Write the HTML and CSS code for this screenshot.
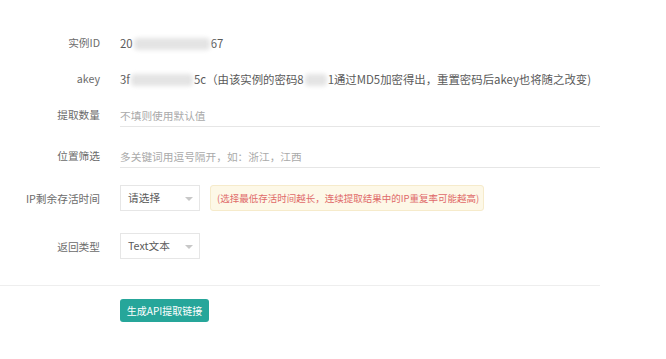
FILE: index.html
```html
<!DOCTYPE html>
<html lang="zh-CN">
<head>
  <meta charset="UTF-8">
  <meta name="viewport" content="width=device-width, initial-scale=1.0">
  <title>API提取</title>
  <link rel="stylesheet" href="styles.css">
</head>
<body>
  <form class="api-form">
    <!-- instance info -->
    <div class="row row-info">
      <span class="label">实例ID</span>
      <span class="value">20<span class="masked mask-id"></span>67</span>
    </div>
    <div class="row row-info">
      <span class="label">akey</span>
      <span class="value">3f<span class="masked mask-key"></span>5c（由该实例的密码8<span class="masked mask-pwd"></span>1通过MD5加密得出，重置密码后akey也将随之改变)</span>
    </div>

    <!-- filters -->
    <div class="row">
      <span class="label">提取数量</span>
      <input class="line-input" type="text" placeholder="不填则使用默认值">
    </div>
    <div class="row row-loc">
      <span class="label">位置筛选</span>
      <input class="line-input" type="text" placeholder="多关键词用逗号隔开，如：浙江，江西">
    </div>
    <div class="row row-ttl">
      <span class="label">IP剩余存活时间</span>
      <div class="select">请选择<i class="caret"></i></div>
      <div class="tip">(选择最低存活时间越长，连续提取结果中的IP重复率可能越高)</div>
    </div>
    <div class="row">
      <span class="label">返回类型</span>
      <div class="select">Text文本<i class="caret"></i></div>
    </div>

    <div class="divider"></div>
    <button type="button" class="btn">生成API提取链接</button>
  </form>
</body>
</html>
```

FILE: styles.css
```css
body {
  margin: 0;
  background: #fff;
  font-family: "Noto Sans CJK SC", "Microsoft YaHei", sans-serif;
  font-size: 10.7px;
  color: #5a5a5a;
}
.api-form {
  width: 600px;
  padding-top: 30px;
}
.row {
  display: flex;
  align-items: center;
  min-height: 25px;
  margin-bottom: 16px;
}
.row-info {
  margin-bottom: 11px;
}
.row-loc {
  margin-bottom: 17px;
}
.row-ttl {
  margin-bottom: 22px;
}
.label {
  width: 100px;
  margin-right: 20px;
  text-align: right;
  color: #6b6b6b;
  white-space: nowrap;
}
.value {
  white-space: nowrap;
  font-size: 11.4px;
  color: #5a5a5a;
}
.masked {
  display: inline-block;
  height: 12px;
  vertical-align: middle;
  background: #e4e4e4;
  border-radius: 4px;
  filter: blur(2px);
}
.mask-id { width: 76px; margin: 0 1px; }
.mask-key { width: 62px; margin: 0 1px; }
.mask-pwd { width: 22px; margin: 0 1px; }

.line-input {
  width: 480px;
  height: 25px;
  box-sizing: border-box;
  padding: 2px 0 0 0;
  border: none;
  border-bottom: 1px solid #e6e6e6;
  font: inherit;
  color: #5a5a5a;
  outline: none;
}
.line-input::placeholder {
  color: #aaa;
}
.select {
  position: relative;
  width: 80px;
  height: 26px;
  box-sizing: border-box;
  border: 1px solid #e6e6e6;
  padding-left: 7px;
  line-height: 24px;
  color: #5a5a5a;
}
.caret {
  position: absolute;
  right: 6px;
  top: 11px;
  border-left: 4px solid transparent;
  border-right: 4px solid transparent;
  border-top: 4px solid #c8c8c8;
}
.tip {
  margin-left: 10px;
  width: 274px;
  height: 26px;
  box-sizing: border-box;
  padding-left: 6px;
  line-height: 24px;
  background: #fdf8e7;
  border: 1px solid #f6ebcb;
  border-radius: 3px;
  color: #e06a6a;
  font-size: 9.5px;
  white-space: nowrap;
}
.divider {
  margin-top: 26px;
  border-top: 1px solid #eee;
}
.btn {
  display: block;
  margin: 13px 0 0 120px;
  width: 89px;
  height: 23px;
  padding: 0;
  border: none;
  border-radius: 3px;
  background: #26a69a;
  color: #fff;
  font: inherit;
  font-size: 10px;
}
```
